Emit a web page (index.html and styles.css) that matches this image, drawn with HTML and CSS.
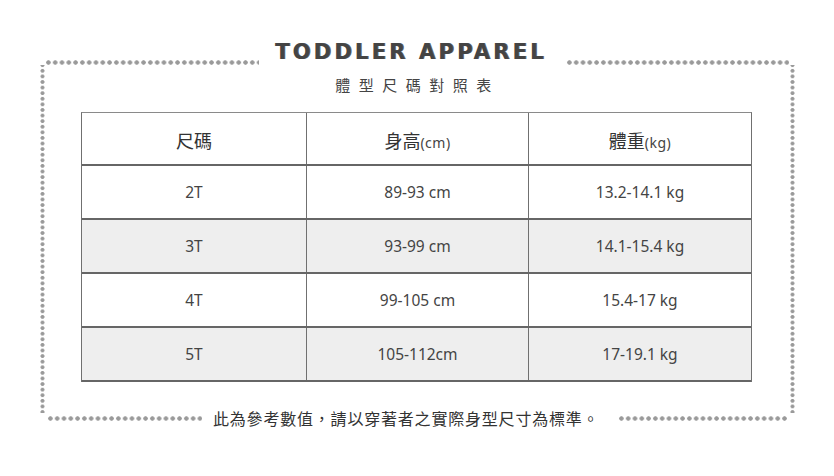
FILE: index.html
```html
<!DOCTYPE html>
<html lang="zh-Hant">
<head>
<meta charset="utf-8">
<title>Toddler Apparel 體型尺碼對照表</title>
<link rel="stylesheet" href="styles.css">
</head>
<body>
<div class="page">
  <div class="frame">
    <div class="frame-top">
      <span class="dots-h left"></span>
      <h1 class="title">TODDLER APPAREL</h1>
      <span class="dots-h"></span>
    </div>
    <div class="frame-mid">
      <span class="dots-v"></span>
      <div class="content">
        <p class="subtitle">體型尺碼對照表</p>
        <div class="table">
          <div class="row head">
            <div class="cell"><span>尺碼</span></div>
            <div class="cell"><span>身高<span class="unit">(cm)</span></span></div>
            <div class="cell"><span>體重<span class="unit">(kg)</span></span></div>
          </div>
          <div class="row">
            <div class="cell">2T</div>
            <div class="cell">89-93 cm</div>
            <div class="cell">13.2-14.1 kg</div>
          </div>
          <div class="row alt">
            <div class="cell">3T</div>
            <div class="cell">93-99 cm</div>
            <div class="cell">14.1-15.4 kg</div>
          </div>
          <div class="row">
            <div class="cell">4T</div>
            <div class="cell">99-105 cm</div>
            <div class="cell">15.4-17 kg</div>
          </div>
          <div class="row alt">
            <div class="cell">5T</div>
            <div class="cell">105-112cm</div>
            <div class="cell">17-19.1 kg</div>
          </div>
        </div>
      </div>
      <span class="dots-v"></span>
    </div>
    <div class="frame-bottom">
      <span class="dots-h left"></span>
      <p class="note">此為參考數值，請以穿著者之實際身型尺寸為標準。</p>
      <span class="dots-h"></span>
    </div>
  </div>
</div>
</body>
</html>
```

FILE: styles.css
```css
html, body {
  margin: 0;
  padding: 0;
  background: #ffffff;
}

.page {
  width: 834px;
  height: 476px;
  padding-top: 40px;
  box-sizing: border-box;
  font-family: "Noto Sans", "Noto Sans CJK TC", sans-serif;
  color: #3a3a3a;
}

.frame {
  margin-left: 40px;
  width: 755px;
}

.dots-h {
  display: block;
  height: 5px;
  flex: 1;
  background-image: radial-gradient(circle at center, #9a9a9a 1.9px, rgba(154, 154, 154, 0) 2.5px);
  background-size: 6.8px 5px;
  background-repeat: repeat-x;
}

.dots-v {
  display: block;
  width: 5px;
  flex: 0 0 5px;
  background-image: radial-gradient(ellipse 2.3px 1.9px at center, #9a9a9a 80%, rgba(154, 154, 154, 0) 100%);
  background-size: 5px 5.6px;
  background-repeat: repeat-y;
  background-position: 0 3px;
}

/* top */
.frame-top {
  display: flex;
  align-items: flex-start;
  padding: 0 6px 0 5px;
  height: 25px;
}

.frame-top .dots-h {
  margin-top: 20px;
}

.frame-top .dots-h.left {
  flex: 0 0 214px;
}

.title {
  margin: 0 19px 0 16px;
  font-family: "DejaVu Sans", sans-serif;
  font-weight: bold;
  font-size: 21px;
  line-height: 24px;
  letter-spacing: 3.2px;
  color: #444;
  text-shadow: 1px 0 0 #666;
  white-space: nowrap;
}

/* middle */
.frame-mid {
  display: flex;
  height: 348px;
}

.content {
  flex: 1;
  padding-top: 10px;
}

.subtitle {
  margin: 0;
  text-align: center;
  font-family: "Noto Sans CJK TC", sans-serif;
  font-size: 15px;
  line-height: 20px;
  letter-spacing: 8.5px;
  color: #444;
}

.table {
  margin: 17px 0 0 36px;
  width: 671px;
  border-top: 1px solid #8a8a8a;
  border-left: 1px solid #707070;
  border-right: 1px solid #707070;
  box-sizing: border-box;
}

.row {
  display: grid;
  grid-template-columns: 224px 222px 1fr;
  height: 54px;
  box-sizing: border-box;
  border-bottom: 2px solid #666;
  background: #fff;
}

.row.head {
  height: 53px;
}

.row.alt {
  background: #eeeeee;
}

.cell {
  display: flex;
  align-items: center;
  justify-content: center;
  font-size: 15.5px;
  color: #444;
}

.cell + .cell {
  border-left: 1px solid #707070;
}

.head .cell {
  font-family: "Noto Sans CJK TC", sans-serif;
  font-size: 18px;
  color: #333;
  padding-top: 3px;
}

.unit {
  font-family: "Noto Sans", sans-serif;
  font-size: 14px;
  letter-spacing: 0.5px;
  color: #444;
}

/* bottom */
.frame-bottom {
  display: flex;
  align-items: center;
  height: 10px;
  padding: 0 8px 0 7px;
}

.frame-bottom .dots-h.left {
  flex: 0 0 155px;
}

.note {
  margin: 0 19px 0 11px;
  font-family: "Noto Sans CJK TC", sans-serif;
  font-size: 16px;
  line-height: 10px;
  letter-spacing: 0.8px;
  color: #333;
  white-space: nowrap;
}
```
